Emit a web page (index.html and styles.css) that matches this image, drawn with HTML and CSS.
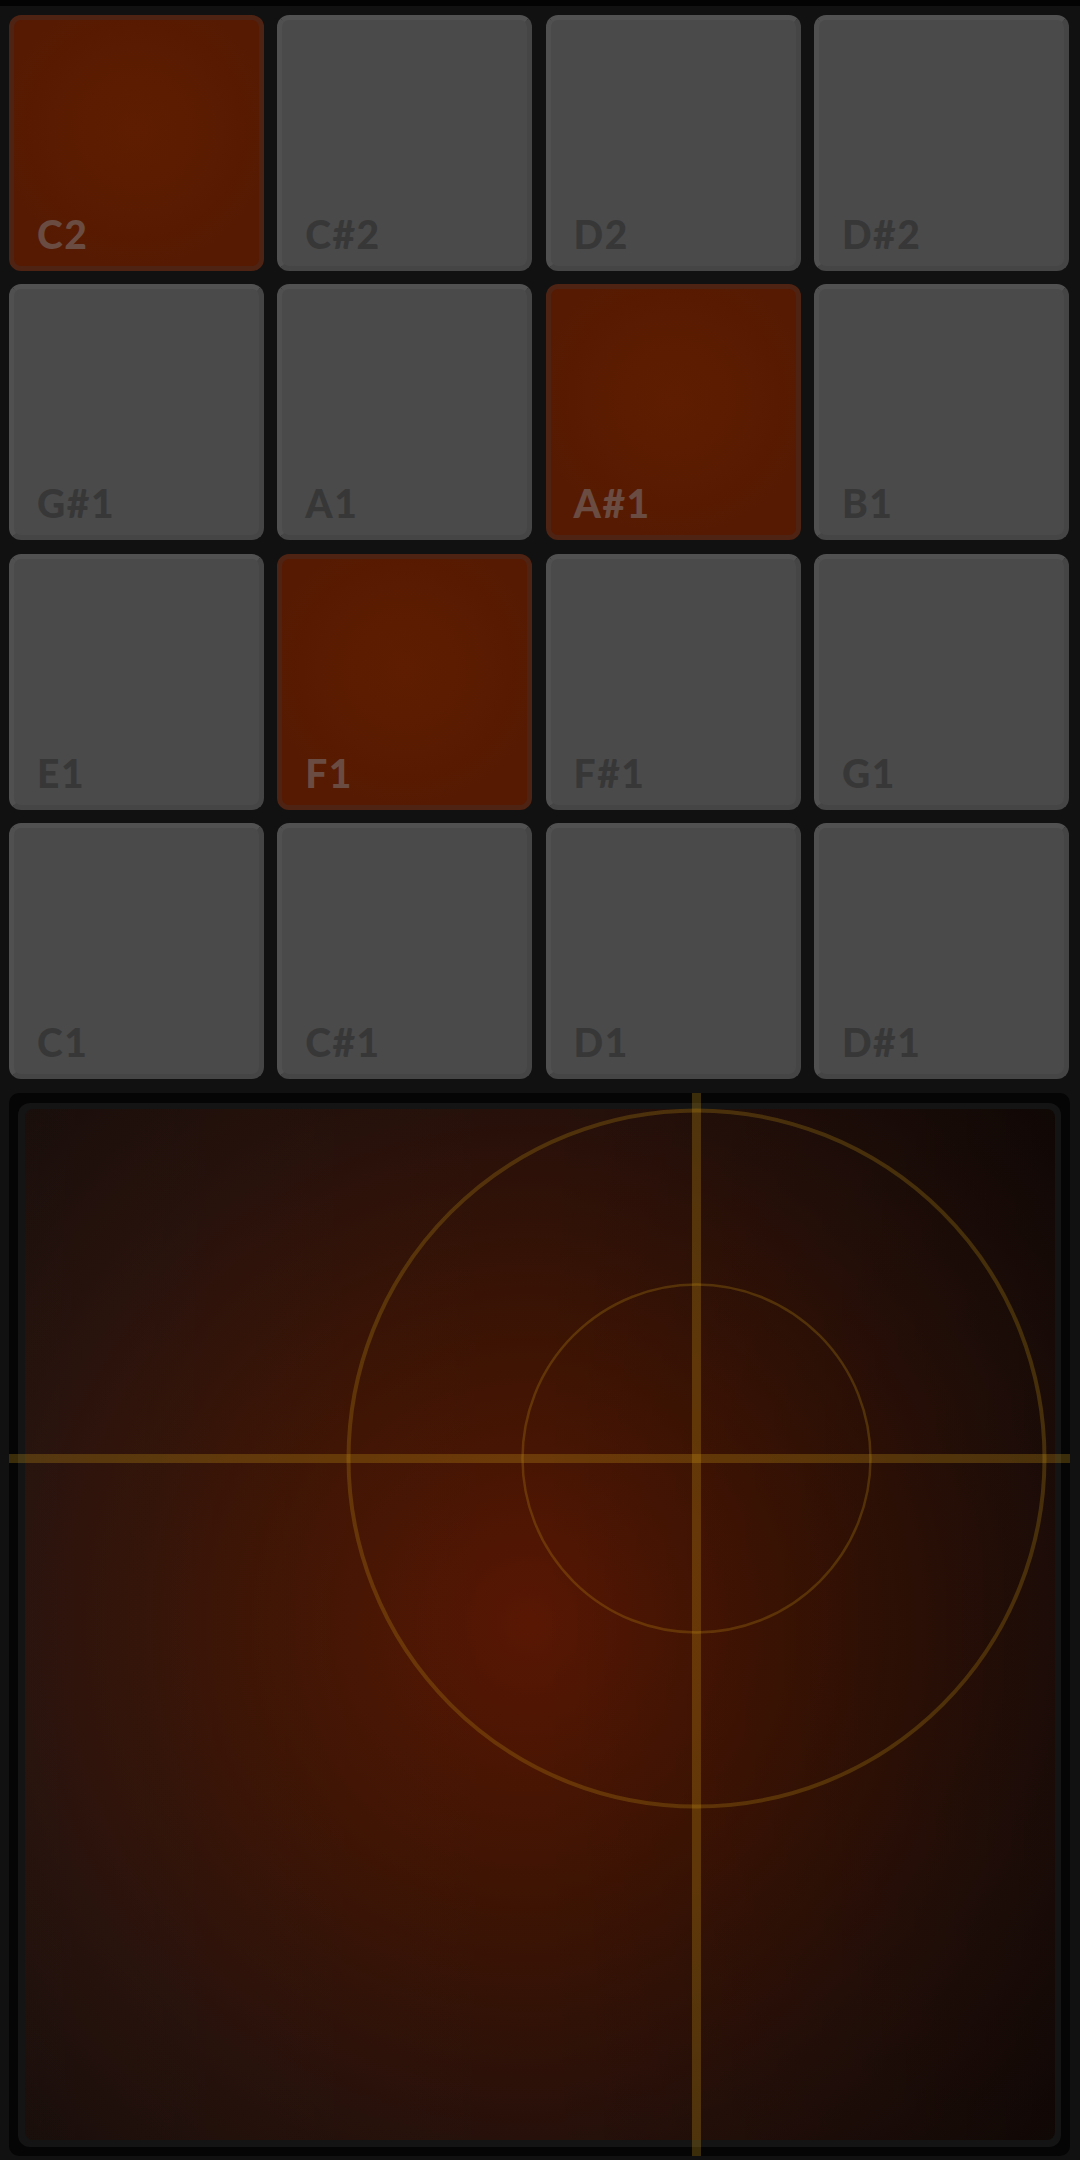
FILE: index.html
```html
<!DOCTYPE html>
<html lang="en">
<head>
<meta charset="utf-8">
<title>Pads</title>
<link rel="stylesheet" href="styles.css">
</head>
<body>
<div class="topbar"></div>
<main class="pads">
  <div class="pad on"><span class="label">C2</span></div>
  <div class="pad"><span class="label">C#2</span></div>
  <div class="pad"><span class="label">D2</span></div>
  <div class="pad"><span class="label">D#2</span></div>
  <div class="pad"><span class="label">G#1</span></div>
  <div class="pad"><span class="label">A1</span></div>
  <div class="pad on"><span class="label">A#1</span></div>
  <div class="pad"><span class="label">B1</span></div>
  <div class="pad"><span class="label">E1</span></div>
  <div class="pad on"><span class="label">F1</span></div>
  <div class="pad"><span class="label">F#1</span></div>
  <div class="pad"><span class="label">G1</span></div>
  <div class="pad"><span class="label">C1</span></div>
  <div class="pad"><span class="label">C#1</span></div>
  <div class="pad"><span class="label">D1</span></div>
  <div class="pad"><span class="label">D#1</span></div>
</main>
<section class="xy">
  <div class="xy-ring"><div class="xy-field"></div></div>
  <svg class="xy-overlay" viewBox="0 0 1061 1063" width="1061" height="1063">
    <circle cx="687.5" cy="365.5" r="348" fill="none" stroke="rgb(200,150,20)" stroke-opacity="0.25" stroke-width="4"/>
    <circle cx="687.5" cy="365.5" r="174" fill="none" stroke="rgb(200,150,20)" stroke-opacity="0.25" stroke-width="2.5"/>
    <rect x="683" y="0" width="9" height="1063" fill="rgb(200,150,20)" fill-opacity="0.28"/>
    <rect x="0" y="361" width="1061" height="9" fill="rgb(200,150,20)" fill-opacity="0.28"/>
  </svg>
</section>
</body>
</html>
```

FILE: styles.css
```css
html, body {
  margin: 0;
  padding: 0;
  background: #111111;
}

body {
  width: 1080px;
  height: 2160px;
  overflow: hidden;
  font-family: Lato, "Open Sans", "Liberation Sans", sans-serif;
}

.topbar {
  height: 6px;
  background: #030303;
}

.pads {
  display: grid;
  grid-template-columns: repeat(4, 255px);
  grid-template-rows: repeat(4, 256px);
  column-gap: 13.3px;
  row-gap: 13.3px;
  padding: 9px 0 0 9px;
}

.pad {
  box-sizing: border-box;
  border: 5px solid;
  border-color: #515151 #454545 #454545 #505050;
  border-radius: 12px;
  background: #4a4a4a;
  display: flex;
  align-items: flex-end;
  padding: 0 0 14px 23px;
}

.label {
  font-weight: 900;
  font-size: 39px;
  line-height: 36px;
  letter-spacing: 1.5px;
  color: #373737;
}

.pad.on {
  background: radial-gradient(circle at 50% 45%, #5e1d00 0%, #561a02 75%);
  border-color: #4e2313;
}

.pad.on .label {
  color: #6a4c42;
}

.xy {
  position: relative;
  box-sizing: border-box;
  margin: 14px 0 0 9px;
  width: 1061px;
  height: 1063px;
  background: #050505;
  border-radius: 10px;
  padding: 10px 9px 9px 9px;
}

.xy-ring {
  box-sizing: border-box;
  height: 100%;
  background: #141414;
  border-radius: 12px;
  padding: 6px 6px 7px 7px;
}

.xy-field {
  height: 100%;
  border-radius: 8px;
  background:
    linear-gradient(to right, rgba(255, 255, 255, 0.015) 0%, rgba(0, 0, 0, 0) 50%, rgba(0, 0, 0, 0.25) 100%),
    radial-gradient(ellipse 72% 72% at 49% 50%, #581703 0%, #3f1403 35%, #26100a 70%, #140a07 100%);
}

.xy-overlay {
  position: absolute;
  left: 0;
  top: 0;
}
```
